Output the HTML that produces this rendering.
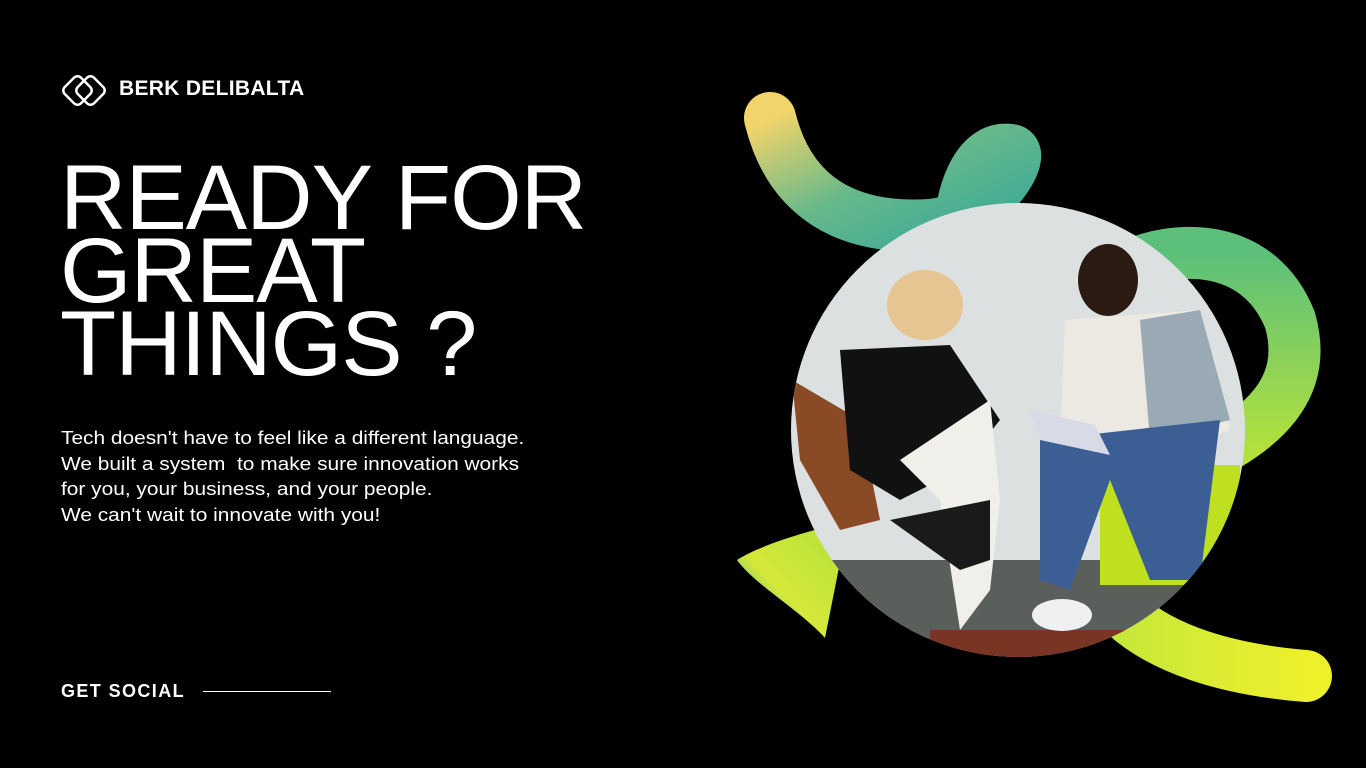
<!DOCTYPE html>
<html><head><meta charset="utf-8"><style>
html,body{margin:0;padding:0;background:#000;width:1366px;height:768px;overflow:hidden;font-family:"Liberation Sans",sans-serif;color:#fff}
.logo{position:absolute;left:60px;top:70px}
.brand{position:absolute;left:119px;top:77px;font-weight:bold;font-size:21px;letter-spacing:0.3px}
h1{position:absolute;left:60px;top:162px;margin:0;font-weight:normal;font-size:92px;line-height:73px;letter-spacing:-1px}
.p{position:absolute;left:61px;top:426px;font-size:18px;line-height:25.5px;transform:scaleX(1.16);transform-origin:left top}
.gs{position:absolute;left:61px;top:681px;font-weight:bold;font-size:18px;letter-spacing:1.4px}
.line{position:absolute;left:203px;top:691px;width:128px;height:1px;background:#fff}
svg.art{position:absolute;left:0;top:0}
</style></head><body>
<svg class="logo" width="48" height="42" viewBox="0 0 48 42" fill="none" stroke="#fff" stroke-width="2.5">
<rect x="6" y="9" width="23" height="23" rx="5" transform="rotate(45 17.5 20.5)"/>
<rect x="19" y="9" width="23" height="23" rx="5" transform="rotate(45 30.5 20.5)"/>
</svg>
<div class="brand">BERK DELIBALTA</div>
<h1>READY FOR<br>GREAT<br>THINGS ?</h1>
<div class="p">Tech doesn't have to feel like a different language.<br>We built a system&nbsp; to make sure innovation works<br>for you, your business, and your people.<br>We can't wait to innovate with you!</div>
<div class="gs">GET SOCIAL</div><div class="line"></div>
<svg class="art" width="1366" height="768" viewBox="0 0 1366 768">
<defs>
<linearGradient id="g1" x1="0" y1="0" x2="1" y2="1"><stop offset="0" stop-color="#f2d46a"/><stop offset="0.5" stop-color="#66b98a"/><stop offset="1" stop-color="#3aa898"/></linearGradient>
<linearGradient id="g2" x1="0" y1="0" x2="0" y2="1"><stop offset="0" stop-color="#5cc07a"/><stop offset="1" stop-color="#b6e23a"/></linearGradient>
<linearGradient id="g3" x1="0" y1="0" x2="1" y2="0"><stop offset="0" stop-color="#c6e83a"/><stop offset="1" stop-color="#eef02a"/></linearGradient>
<linearGradient id="g4" x1="1" y1="0" x2="0" y2="1"><stop offset="0" stop-color="#aee23a"/><stop offset="0.6" stop-color="#d6e83a"/><stop offset="1" stop-color="#1aa6c0"/></linearGradient>
<clipPath id="c"><circle cx="1018" cy="430" r="227"/></clipPath>
</defs>
<g fill="none" stroke-linecap="round" stroke-width="52">
<path d="M770 118 C790 200 850 230 930 225 C990 220 1030 150 1010 150 C975 145 960 200 960 230" stroke="url(#g1)"/>
<path d="M1120 270 C1180 240 1260 245 1290 320 C1310 390 1260 430 1200 460" stroke="url(#g2)"/>
<path d="M1120 610 C1160 650 1230 670 1306 676" stroke="url(#g3)"/>
</g>
<path d="M737 560 C760 545 810 530 848 522 L825 638 C800 610 755 585 737 560 Z" fill="url(#g4)"/>
<g clip-path="url(#c)">
<rect x="780" y="190" width="480" height="480" fill="#dde0e1"/>
<rect x="780" y="560" width="480" height="110" fill="#5b5f5c"/>
<rect x="930" y="630" width="200" height="30" fill="#7a3424"/>
<rect x="1100" y="465" width="140" height="120" fill="#bfe01e"/>
<path d="M792 380 L860 420 L880 520 L840 530 L800 460 Z" fill="#8a4a26"/>
<path d="M840 350 L950 345 L1000 420 L960 470 L900 500 L850 470 Z" fill="#111"/>
<path d="M900 460 L990 400 L1000 500 L990 590 L960 630 L940 500 Z" fill="#f0efea"/>
<ellipse cx="925" cy="305" rx="38" ry="35" fill="#e6c592"/>
<path d="M890 520 L990 500 L990 560 L960 570 Z" fill="#1a1a1a"/>
<path d="M1065 320 L1200 310 L1230 430 L1160 460 L1060 440 Z" fill="#ebe9e2"/>
<path d="M1140 320 L1200 310 L1230 420 L1150 440 Z" fill="#9aaab5"/>
<path d="M1040 440 L1220 420 L1200 580 L1150 580 L1110 480 L1070 590 L1040 580 Z" fill="#3b5f95"/>
<ellipse cx="1108" cy="280" rx="30" ry="36" fill="#2a1a12"/>
<path d="M1030 410 L1095 425 L1110 455 L1040 440 Z" fill="#d9dae8"/>
<ellipse cx="1062" cy="615" rx="30" ry="16" fill="#f0f0f2"/>
</g>
</svg>
</body></html>
